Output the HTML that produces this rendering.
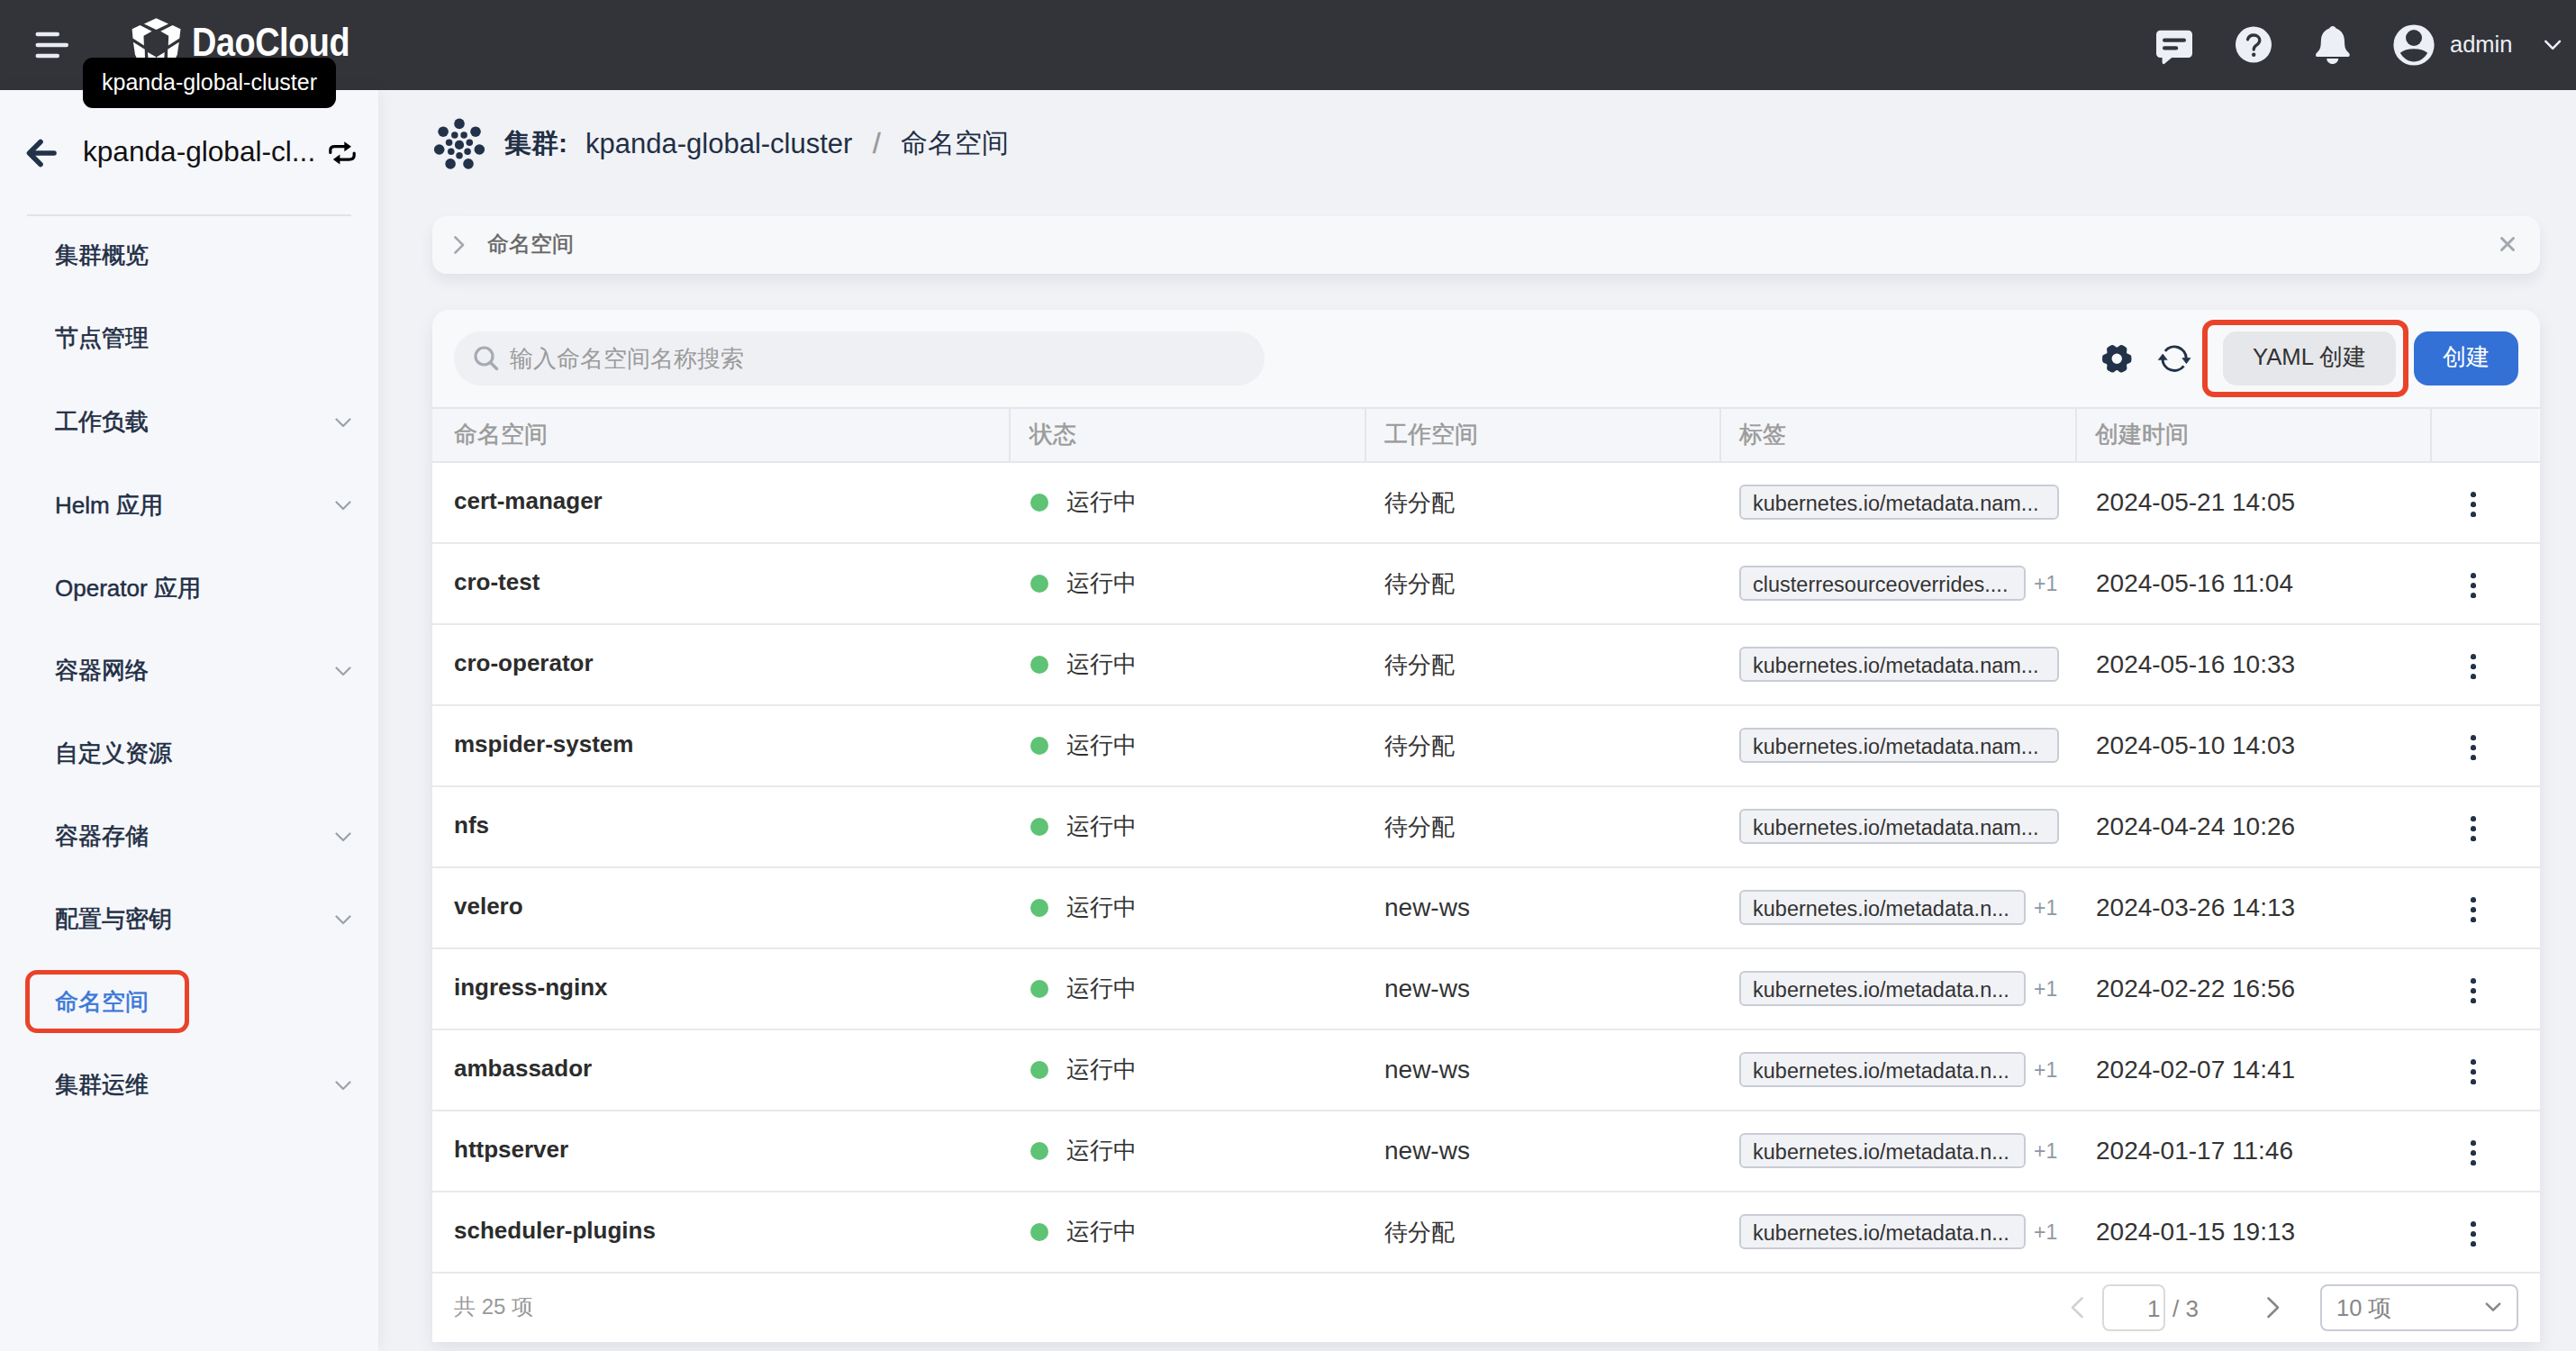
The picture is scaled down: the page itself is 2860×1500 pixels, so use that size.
<!DOCTYPE html>
<html><head><meta charset="utf-8">
<style>
*{box-sizing:border-box;margin:0;padding:0}
html,body{width:2860px;height:1500px;overflow:hidden}
body{position:relative;background:#f1f2f6;font-family:"Liberation Sans",sans-serif;color:#333}
.abs{position:absolute}
.t{position:absolute;white-space:nowrap;line-height:1}
#hdr{position:absolute;left:0;top:0;width:2860px;height:100px;background:#333439}
#side{position:absolute;left:0;top:100px;width:420px;height:1400px;background:#f6f7fb;box-shadow:2px 0 18px rgba(0,0,0,0.06)}
.menu{position:absolute;left:61px;font-size:25.5px;font-weight:400;-webkit-text-stroke:0.6px currentColor;color:#1f2f45;line-height:1;white-space:nowrap}
.lat{font-weight:400;-webkit-text-stroke:0.45px currentColor;font-size:26px}
.chev{position:absolute;left:372px;width:18px;height:11px}
.card{position:absolute;background:#fff}
.hcell{position:absolute;top:454px;height:58px;font-size:26px;font-weight:500;color:#9b9b9b;line-height:58px;white-space:nowrap}
.row{position:absolute;left:480px;width:2340px;height:90px;background:#fff;border-bottom:2px solid #e8e9ed}
.nm{position:absolute;left:24px;top:-2px;height:88px;line-height:88px;font-size:26px;font-weight:bold;color:#2c2c2c;white-space:nowrap}
.st{position:absolute;left:704px;top:-1px;height:88px;line-height:88px;font-size:26px;color:#333;white-space:nowrap}
.dot{position:absolute;left:664px;top:34px;width:20px;height:20px;border-radius:50%;background:#5ec374}
.ws{position:absolute;left:1057px;top:0;height:88px;line-height:88px;font-size:26px;color:#333;white-space:nowrap}
.ws.l{font-size:28px}
.tag{position:absolute;left:1451px;top:24px;height:39px;border:2px solid #c9ccd5;background:#f1f2f6;border-radius:6px;font-size:23.5px;color:#333;line-height:38px;padding-left:13px;white-space:nowrap;overflow:hidden}
.plus{position:absolute;left:1778px;top:0;height:88px;line-height:88px;font-size:23px;color:#8f97a3}
.dt{position:absolute;left:1847px;top:0;height:88px;line-height:88px;font-size:28px;color:#333;white-space:nowrap}
.hc{top:470px;font-size:25.5px;font-weight:400;-webkit-text-stroke:0.5px #9b9b9b;color:#9b9b9b}
.more{position:absolute;left:2263px;top:31.7px;width:6px;height:28px}
</style></head><body>

<!-- HEADER -->
<div id="hdr">
  <svg class="abs" style="left:0;top:0" width="100" height="100">
    <rect x="39.5" y="35.8" width="26.5" height="4.4" rx="2.2" fill="#e9ecf3"/>
    <rect x="39.5" y="47.8" width="36.5" height="4.4" rx="2.2" fill="#e9ecf3"/>
    <rect x="39.5" y="59.8" width="26.5" height="4.4" rx="2.2" fill="#e9ecf3"/>
  </svg>
  <svg class="abs" style="left:0;top:0" width="220" height="100">
    <g fill="#fff">
      <polygon points="173.5,20.2 187,26.4 173.5,33.1 159.9,26.4"/>
      <polygon points="146.6,32.2 155.5,28.1 168.6,34.7 159.5,39.7 159.9,50.5 147.5,42.6"/>
      <polygon points="200.5,32.2 191.6,28.1 178.3,34.7 187.2,39.7 186.8,50.5 199.3,42.6"/>
      <polygon points="147.9,46.7 160.7,54.8 161.1,70 153.7,68 150,60.8"/>
      <polygon points="198.8,46.7 186.2,54.8 186,70 193,68 196.8,60.8"/>
      <polygon points="164,57.9 173.2,63.3 173.2,70 164.9,70"/>
      <polygon points="182.7,57.9 174,63.3 174,70 181.9,70"/>
    </g>
  </svg>
  <div class="t" id="logo" style="left:213px;top:25px;font-size:44px;font-weight:bold;color:#fff;transform-origin:0 0;transform:scaleX(0.86);letter-spacing:-0.5px">DaoCloud</div>

  <!-- chat -->
  <svg class="abs" style="left:2390px;top:28px" width="50" height="48" viewBox="0 0 50 48">
    <path d="M8.5,5.8 H39.5 A4.5,4.5 0 0 1 44,10.3 V31.5 A4.5,4.5 0 0 1 39.5,36 H21.2 L13.2,42.8 A1.6,1.6 0 0 1 10.6,41.6 V36 H8.5 A4.5,4.5 0 0 1 4,31.5 V10.3 A4.5,4.5 0 0 1 8.5,5.8 Z" fill="#eceff6"/>
    <rect x="11" y="14.6" width="26" height="4.2" rx="2.1" fill="#333439"/>
    <rect x="11" y="23.3" width="17.2" height="4.2" rx="2.1" fill="#333439"/>
  </svg>
  <!-- help -->
  <svg class="abs" style="left:2478px;top:26px" width="48" height="48" viewBox="0 0 48 48">
    <circle cx="24" cy="23.6" r="20" fill="#eceff6"/>
    <path d="M17.5,17.8 C18.5,14.5 21,13 24.2,13 C28,13 30.8,15.5 30.8,18.7 C30.8,21.5 29,22.8 27,24.3 C25.3,25.6 24.2,26.6 24.2,29" fill="none" stroke="#333439" stroke-width="3.3" stroke-linecap="round"/>
    <circle cx="24.2" cy="34.8" r="2.2" fill="#333439"/>
  </svg>
  <!-- bell -->
  <svg class="abs" style="left:2566px;top:26px" width="48" height="48" viewBox="0 0 48 48">
    <path d="M23.9,3 C25.6,3 26.8,4.2 27.6,5.6 C32.5,7.2 36.2,11.5 36.8,17.5 L37.2,24 C37.5,27.5 38.5,29.5 41.5,32.5 C43.5,34.5 43,37.1 40.5,37.1 H7.3 C4.8,37.1 4.3,34.5 6.3,32.5 C9.3,29.5 10.3,27.5 10.6,24 L11,17.5 C11.6,11.5 15.3,7.2 20.2,5.6 C21,4.2 22.2,3 23.9,3 Z" fill="#eceff6"/>
    <path d="M17.2,39 H30.2 C30,42.5 27.3,45 23.7,45 C20.1,45 17.4,42.5 17.2,39 Z" fill="#eceff6"/>
  </svg>
  <!-- avatar -->
  <svg class="abs" style="left:2654px;top:24px" width="52" height="52" viewBox="0 0 52 52">
    <circle cx="26" cy="26" r="22.6" fill="#eceff6"/>
    <circle cx="26" cy="18" r="9" fill="#333439"/>
    <path d="M10.8,34.8 C14.5,31.5 19.8,30.2 26,30.2 C32.2,30.2 37.5,31.5 41.2,34.8 C37.8,40.5 32.5,44.5 26,44.5 C19.5,44.5 14.2,40.5 10.8,34.8 Z" fill="#333439"/>
  </svg>
  <div class="t" style="left:2720px;top:37px;font-size:25.5px;color:#eceff6">admin</div>
  <svg class="abs" style="left:2820px;top:40px" width="28" height="20" viewBox="0 0 28 20">
    <path d="M6.3,5.9 L14.15,13.9 L22,5.9" fill="none" stroke="#eceff6" stroke-width="2.5" stroke-linecap="round" stroke-linejoin="round"/>
  </svg>
</div>

<!-- TOOLTIP -->
<div class="abs" style="left:92px;top:64px;width:281px;height:56px;background:#000;border-radius:11px;z-index:5"></div>
<div class="t" style="left:113px;top:79px;font-size:25px;color:#fff;z-index:6">kpanda-global-cluster</div>

<!-- SIDEBAR -->
<div id="side"></div>
<div class="abs" style="left:28px;top:1077px;width:181.5px;height:70px;border:5.8px solid #e9432a;border-radius:13px;z-index:3"></div>
<svg class="abs" style="left:0;top:100px" width="420" height="200">
  <path d="M60,70 H33 M45,57.5 L32.5,70 L45,82.5" fill="none" stroke="#223248" stroke-width="5.6" stroke-linecap="round" stroke-linejoin="round"/>
  <g fill="none" stroke="#000" stroke-width="3.2" stroke-linecap="round">
    <path d="M366.8,69.5 V66.6 Q366.8,62.7 371.6,62.7 H383"/>
    <path d="M393.2,70.1 V72.5 Q393.2,77.1 387.3,77.1 H376.5"/>
  </g>
  <polygon points="382.3,57.2 390,62.7 382.3,68.3" fill="#000"/>
  <polygon points="377.4,71.5 369.8,77.1 377.4,82.5" fill="#000"/>
  <rect x="30" y="138" width="360" height="2" fill="#e1e3e8"/>
</svg>
<div class="t" style="left:92px;top:153px;font-size:31.6px;color:#111">kpanda-global-cl...</div>
<div class="menu" style="top:271.3px;color:#1f2f45">集群概览</div>
<div class="menu" style="top:363.3px;color:#1f2f45">节点管理</div>
<div class="menu" style="top:455.8px;color:#1f2f45">工作负载</div>
<svg class="chev" style="top:463.5px" viewBox="0 0 18 11"><path d="M1.5,1.5 L9,9 L16.5,1.5" fill="none" stroke="#9ca1a9" stroke-width="2.2" stroke-linecap="round" stroke-linejoin="round"/></svg>
<div class="menu" style="top:548.3px;color:#1f2f45"><span class="lat">Helm</span> 应用</div>
<svg class="chev" style="top:556.0px" viewBox="0 0 18 11"><path d="M1.5,1.5 L9,9 L16.5,1.5" fill="none" stroke="#9ca1a9" stroke-width="2.2" stroke-linecap="round" stroke-linejoin="round"/></svg>
<div class="menu" style="top:640.3px;color:#1f2f45"><span class="lat">Operator</span> 应用</div>
<div class="menu" style="top:732.3px;color:#1f2f45">容器网络</div>
<svg class="chev" style="top:740.0px" viewBox="0 0 18 11"><path d="M1.5,1.5 L9,9 L16.5,1.5" fill="none" stroke="#9ca1a9" stroke-width="2.2" stroke-linecap="round" stroke-linejoin="round"/></svg>
<div class="menu" style="top:824.3px;color:#1f2f45">自定义资源</div>
<div class="menu" style="top:916.3px;color:#1f2f45">容器存储</div>
<svg class="chev" style="top:924.0px" viewBox="0 0 18 11"><path d="M1.5,1.5 L9,9 L16.5,1.5" fill="none" stroke="#9ca1a9" stroke-width="2.2" stroke-linecap="round" stroke-linejoin="round"/></svg>
<div class="menu" style="top:1008.3px;color:#1f2f45">配置与密钥</div>
<svg class="chev" style="top:1016.0px" viewBox="0 0 18 11"><path d="M1.5,1.5 L9,9 L16.5,1.5" fill="none" stroke="#9ca1a9" stroke-width="2.2" stroke-linecap="round" stroke-linejoin="round"/></svg>
<div class="menu" style="top:1100.3px;color:#3a78d8">命名空间</div>
<div class="menu" style="top:1192.3px;color:#1f2f45">集群运维</div>
<svg class="chev" style="top:1200.0px" viewBox="0 0 18 11"><path d="M1.5,1.5 L9,9 L16.5,1.5" fill="none" stroke="#9ca1a9" stroke-width="2.2" stroke-linecap="round" stroke-linejoin="round"/></svg>

<!-- MAIN TITLE -->
<svg class="abs" style="left:470px;top:120px" width="80" height="80" viewBox="470 120 80 80">
  <g fill="#223248">
    <circle cx="510" cy="137.4" r="5.8"/><circle cx="492.1" cy="146.2" r="5.8"/><circle cx="528" cy="146.2" r="5.8"/>
    <circle cx="487.7" cy="166" r="5.8"/><circle cx="532.3" cy="166" r="5.8"/><circle cx="500.1" cy="181.9" r="5.8"/><circle cx="520" cy="181.9" r="5.8"/>
    <circle cx="504.8" cy="150.1" r="3.75"/><circle cx="515.1" cy="150.1" r="3.75"/><circle cx="498.6" cy="158.2" r="3.75"/><circle cx="521.3" cy="158.2" r="3.75"/>
    <circle cx="500.8" cy="168.2" r="3.75"/><circle cx="519.1" cy="168.2" r="3.75"/><circle cx="510" cy="172.7" r="3.75"/>
    <circle cx="510" cy="160.9" r="5.1"/>
  </g>
</svg>
<div class="t" style="left:560px;top:144px;font-size:30px;font-weight:700;color:#1f2f45">集群:</div>
<div class="t" style="left:650px;top:144px;font-size:31px;color:#1f2f45">kpanda-global-cluster</div>
<div class="t" style="left:969px;top:144px;font-size:31px;color:#999;-webkit-text-stroke:0.5px #999">/</div>
<div class="t" style="left:1000px;top:144px;font-size:30px;color:#1f2f45">命名空间</div>

<!-- COLLAPSE CARD -->
<div class="abs" style="left:480px;top:240px;width:2340px;height:64px;background:#f7f8fa;border-radius:16px;box-shadow:0 8px 16px rgba(20,30,50,0.07)"></div>
<svg class="abs" style="left:500px;top:258px" width="20" height="28" viewBox="0 0 20 28"><path d="M5.5,5.5 L14,14 L5.5,22.5" fill="none" stroke="#a3a7ae" stroke-width="2.6" stroke-linecap="round" stroke-linejoin="round"/></svg>
<div class="t" style="left:540.5px;top:260px;font-size:23.5px;font-weight:400;-webkit-text-stroke:0.5px #666;color:#666">命名空间</div>
<svg class="abs" style="left:2770px;top:257px" width="28" height="28" viewBox="0 0 28 28"><path d="M7.5,7.5 L20.5,20.5 M20.5,7.5 L7.5,20.5" fill="none" stroke="#a3a7ae" stroke-width="3" stroke-linecap="round"/></svg>

<!-- TABLE CARD -->
<div class="abs" style="left:480px;top:344px;width:2340px;height:1146px;background:#f8f9fb;border-radius:18px 18px 0 0;box-shadow:0 8px 20px rgba(20,30,50,0.08)"></div>
<div class="abs" style="left:504px;top:368px;width:900px;height:60px;background:#eff0f4;border-radius:30px"></div>
<svg class="abs" style="left:520px;top:378px" width="40" height="40" viewBox="0 0 40 40"><circle cx="17.5" cy="17.5" r="9.5" fill="none" stroke="#a6abb3" stroke-width="3.2"/><path d="M24.5,24.5 L31.5,31.5" stroke="#a6abb3" stroke-width="3.4" stroke-linecap="round"/></svg>
<div class="t" style="left:566px;top:385px;font-size:26px;color:#9b9b9b">输入命名空间名称搜索</div>

<!-- TOOLBAR -->
<svg class="abs" style="left:2330px;top:378px" width="40" height="40" viewBox="0 0 40 40">
  <path fill="#223248" fill-rule="evenodd" d="M36.45,20.30 L36.44,20.72 L36.43,21.15 L36.40,21.57 L36.36,21.99 L36.31,22.41 L36.25,22.83 L36.17,23.25 L36.00,23.65 L35.74,24.02 L35.39,24.36 L34.97,24.66 L34.49,24.93 L33.99,25.16 L33.47,25.38 L32.97,25.57 L32.50,25.76 L32.09,25.95 L31.73,26.15 L31.45,26.38 L31.25,26.65 L31.12,26.96 L31.06,27.32 L31.06,27.73 L31.10,28.18 L31.18,28.68 L31.26,29.21 L31.33,29.76 L31.38,30.32 L31.38,30.87 L31.33,31.38 L31.22,31.86 L31.03,32.27 L30.77,32.61 L30.44,32.89 L30.11,33.15 L29.77,33.41 L29.43,33.65 L29.07,33.89 L28.71,34.11 L28.35,34.33 L27.98,34.54 L27.60,34.73 L27.22,34.92 L26.84,35.10 L26.45,35.27 L26.06,35.42 L25.66,35.56 L25.23,35.62 L24.77,35.57 L24.31,35.44 L23.83,35.22 L23.36,34.95 L22.91,34.63 L22.47,34.29 L22.05,33.95 L21.65,33.64 L21.28,33.37 L20.92,33.17 L20.58,33.04 L20.25,33.00 L19.92,33.04 L19.58,33.17 L19.22,33.37 L18.85,33.64 L18.45,33.95 L18.03,34.29 L17.59,34.63 L17.14,34.95 L16.67,35.22 L16.19,35.44 L15.73,35.57 L15.27,35.62 L14.84,35.56 L14.44,35.42 L14.05,35.27 L13.66,35.10 L13.28,34.92 L12.90,34.73 L12.52,34.54 L12.15,34.33 L11.79,34.11 L11.43,33.89 L11.07,33.65 L10.73,33.41 L10.39,33.15 L10.06,32.89 L9.73,32.61 L9.47,32.27 L9.28,31.86 L9.17,31.38 L9.12,30.87 L9.12,30.32 L9.17,29.76 L9.24,29.21 L9.32,28.68 L9.40,28.18 L9.44,27.73 L9.44,27.32 L9.38,26.96 L9.25,26.65 L9.05,26.38 L8.77,26.15 L8.41,25.95 L8.00,25.76 L7.53,25.57 L7.03,25.38 L6.51,25.16 L6.01,24.93 L5.53,24.66 L5.11,24.36 L4.76,24.02 L4.50,23.65 L4.33,23.25 L4.25,22.83 L4.19,22.41 L4.14,21.99 L4.10,21.57 L4.07,21.15 L4.06,20.72 L4.05,20.30 L4.06,19.88 L4.07,19.45 L4.10,19.03 L4.14,18.61 L4.19,18.19 L4.25,17.77 L4.33,17.35 L4.50,16.95 L4.76,16.58 L5.11,16.24 L5.53,15.94 L6.01,15.67 L6.51,15.44 L7.03,15.22 L7.53,15.03 L8.00,14.84 L8.41,14.65 L8.77,14.45 L9.05,14.22 L9.25,13.95 L9.38,13.64 L9.44,13.28 L9.44,12.87 L9.40,12.42 L9.32,11.92 L9.24,11.39 L9.17,10.84 L9.12,10.28 L9.12,9.73 L9.17,9.22 L9.28,8.74 L9.47,8.33 L9.73,7.99 L10.06,7.71 L10.39,7.45 L10.73,7.19 L11.07,6.95 L11.43,6.71 L11.79,6.49 L12.15,6.27 L12.52,6.06 L12.90,5.87 L13.28,5.68 L13.66,5.50 L14.05,5.33 L14.44,5.18 L14.84,5.04 L15.27,4.98 L15.73,5.03 L16.19,5.16 L16.67,5.38 L17.14,5.65 L17.59,5.97 L18.03,6.31 L18.45,6.65 L18.85,6.96 L19.22,7.23 L19.58,7.43 L19.92,7.56 L20.25,7.60 L20.58,7.56 L20.92,7.43 L21.28,7.23 L21.65,6.96 L22.05,6.65 L22.47,6.31 L22.91,5.97 L23.36,5.65 L23.83,5.38 L24.31,5.16 L24.77,5.03 L25.23,4.98 L25.66,5.04 L26.06,5.18 L26.45,5.33 L26.84,5.50 L27.22,5.68 L27.60,5.87 L27.98,6.06 L28.35,6.27 L28.71,6.49 L29.07,6.71 L29.43,6.95 L29.77,7.19 L30.11,7.45 L30.44,7.71 L30.77,7.99 L31.03,8.33 L31.22,8.74 L31.33,9.22 L31.38,9.73 L31.38,10.28 L31.33,10.84 L31.26,11.39 L31.18,11.92 L31.10,12.42 L31.06,12.87 L31.06,13.28 L31.12,13.64 L31.25,13.95 L31.45,14.22 L31.73,14.45 L32.09,14.65 L32.50,14.84 L32.97,15.03 L33.47,15.22 L33.99,15.44 L34.49,15.67 L34.97,15.94 L35.39,16.24 L35.74,16.58 L36.00,16.95 L36.17,17.35 L36.25,17.77 L36.31,18.19 L36.36,18.61 L36.40,19.03 L36.43,19.45 L36.44,19.88 Z M25.95,20.30 A5.7,5.7 0 1 0 14.55,20.30 A5.7,5.7 0 1 0 25.95,20.30 Z"/>
</svg>
<svg class="abs" style="left:2394px;top:378px" width="40" height="40" viewBox="0 0 40 40">
  <g fill="none" stroke="#223248" stroke-width="3">
    <path d="M9.84,11.9 A13.2,13.2 0 0 1 33.3,20.2"/>
    <path d="M30.5,28.3 A13.2,13.2 0 0 1 6.9,20.2"/>
  </g>
  <polygon points="28.8,19.6 38,19.6 33.4,25.7" fill="#223248" stroke="#223248" stroke-width="0.6" stroke-linejoin="round"/>
  <polygon points="2.2,21.6 12.2,21.6 7.2,15" fill="#223248" stroke="#223248" stroke-width="0.6" stroke-linejoin="round"/>
</svg>
<div class="abs" style="left:2445px;top:355px;width:229px;height:86px;border:6.2px solid #e9432a;border-radius:13px"></div>
<div class="abs" style="left:2468px;top:368px;width:192px;height:60px;background:#e6e7eb;border-radius:15px"></div>
<div class="t" style="left:2501px;top:384px;font-size:25.7px;color:#333">YAML 创建</div>
<div class="abs" style="left:2680px;top:368px;width:116px;height:60px;background:#3371d6;border-radius:16px"></div>
<div class="t" style="left:2712px;top:384px;font-size:25.5px;color:#fff">创建</div>

<!-- TABLE HEADER -->
<div class="abs" style="left:480px;top:452px;width:2340px;height:2px;background:#e4e6eb"></div>
<div class="abs" style="left:480px;top:454px;width:2338px;height:58px;background:#f5f6f9"></div>
<div class="abs" style="left:480px;top:512px;width:2340px;height:2px;background:#e4e6eb"></div>
<div class="abs" style="left:1120px;top:454px;width:2px;height:58px;background:#e4e6eb"></div>
<div class="abs" style="left:1515px;top:454px;width:2px;height:58px;background:#e4e6eb"></div>
<div class="abs" style="left:1909px;top:454px;width:2px;height:58px;background:#e4e6eb"></div>
<div class="abs" style="left:2304px;top:454px;width:2px;height:58px;background:#e4e6eb"></div>
<div class="abs" style="left:2698px;top:454px;width:2px;height:58px;background:#e4e6eb"></div>
<div class="t hc" style="left:504px">命名空间</div>
<div class="t hc" style="left:1143px">状态</div>
<div class="t hc" style="left:1537px">工作空间</div>
<div class="t hc" style="left:1931px">标签</div>
<div class="t hc" style="left:2326px">创建时间</div>
<div class="row" style="top:514px">
  <div class="nm">cert-manager</div><div class="dot"></div><div class="st">运行中</div><div class="ws">待分配</div>
  <div class="tag" style="width:355px">kubernetes.io/metadata.nam...</div>
  <div class="dt">2024-05-21 14:05</div>
  <svg class="more" viewBox="0 0 6 28"><circle cx="3" cy="3.2" r="3.1" fill="#223248"/><circle cx="3" cy="14.2" r="3.1" fill="#223248"/><circle cx="3" cy="25.2" r="3.1" fill="#223248"/></svg>
</div>
<div class="row" style="top:604px">
  <div class="nm">cro-test</div><div class="dot"></div><div class="st">运行中</div><div class="ws">待分配</div>
  <div class="tag" style="width:318px">clusterresourceoverrides....</div><div class="plus">+1</div>
  <div class="dt">2024-05-16 11:04</div>
  <svg class="more" viewBox="0 0 6 28"><circle cx="3" cy="3.2" r="3.1" fill="#223248"/><circle cx="3" cy="14.2" r="3.1" fill="#223248"/><circle cx="3" cy="25.2" r="3.1" fill="#223248"/></svg>
</div>
<div class="row" style="top:694px">
  <div class="nm">cro-operator</div><div class="dot"></div><div class="st">运行中</div><div class="ws">待分配</div>
  <div class="tag" style="width:355px">kubernetes.io/metadata.nam...</div>
  <div class="dt">2024-05-16 10:33</div>
  <svg class="more" viewBox="0 0 6 28"><circle cx="3" cy="3.2" r="3.1" fill="#223248"/><circle cx="3" cy="14.2" r="3.1" fill="#223248"/><circle cx="3" cy="25.2" r="3.1" fill="#223248"/></svg>
</div>
<div class="row" style="top:784px">
  <div class="nm">mspider-system</div><div class="dot"></div><div class="st">运行中</div><div class="ws">待分配</div>
  <div class="tag" style="width:355px">kubernetes.io/metadata.nam...</div>
  <div class="dt">2024-05-10 14:03</div>
  <svg class="more" viewBox="0 0 6 28"><circle cx="3" cy="3.2" r="3.1" fill="#223248"/><circle cx="3" cy="14.2" r="3.1" fill="#223248"/><circle cx="3" cy="25.2" r="3.1" fill="#223248"/></svg>
</div>
<div class="row" style="top:874px">
  <div class="nm">nfs</div><div class="dot"></div><div class="st">运行中</div><div class="ws">待分配</div>
  <div class="tag" style="width:355px">kubernetes.io/metadata.nam...</div>
  <div class="dt">2024-04-24 10:26</div>
  <svg class="more" viewBox="0 0 6 28"><circle cx="3" cy="3.2" r="3.1" fill="#223248"/><circle cx="3" cy="14.2" r="3.1" fill="#223248"/><circle cx="3" cy="25.2" r="3.1" fill="#223248"/></svg>
</div>
<div class="row" style="top:964px">
  <div class="nm">velero</div><div class="dot"></div><div class="st">运行中</div><div class="ws l">new-ws</div>
  <div class="tag" style="width:318px">kubernetes.io/metadata.n...</div><div class="plus">+1</div>
  <div class="dt">2024-03-26 14:13</div>
  <svg class="more" viewBox="0 0 6 28"><circle cx="3" cy="3.2" r="3.1" fill="#223248"/><circle cx="3" cy="14.2" r="3.1" fill="#223248"/><circle cx="3" cy="25.2" r="3.1" fill="#223248"/></svg>
</div>
<div class="row" style="top:1054px">
  <div class="nm">ingress-nginx</div><div class="dot"></div><div class="st">运行中</div><div class="ws l">new-ws</div>
  <div class="tag" style="width:318px">kubernetes.io/metadata.n...</div><div class="plus">+1</div>
  <div class="dt">2024-02-22 16:56</div>
  <svg class="more" viewBox="0 0 6 28"><circle cx="3" cy="3.2" r="3.1" fill="#223248"/><circle cx="3" cy="14.2" r="3.1" fill="#223248"/><circle cx="3" cy="25.2" r="3.1" fill="#223248"/></svg>
</div>
<div class="row" style="top:1144px">
  <div class="nm">ambassador</div><div class="dot"></div><div class="st">运行中</div><div class="ws l">new-ws</div>
  <div class="tag" style="width:318px">kubernetes.io/metadata.n...</div><div class="plus">+1</div>
  <div class="dt">2024-02-07 14:41</div>
  <svg class="more" viewBox="0 0 6 28"><circle cx="3" cy="3.2" r="3.1" fill="#223248"/><circle cx="3" cy="14.2" r="3.1" fill="#223248"/><circle cx="3" cy="25.2" r="3.1" fill="#223248"/></svg>
</div>
<div class="row" style="top:1234px">
  <div class="nm">httpserver</div><div class="dot"></div><div class="st">运行中</div><div class="ws l">new-ws</div>
  <div class="tag" style="width:318px">kubernetes.io/metadata.n...</div><div class="plus">+1</div>
  <div class="dt">2024-01-17 11:46</div>
  <svg class="more" viewBox="0 0 6 28"><circle cx="3" cy="3.2" r="3.1" fill="#223248"/><circle cx="3" cy="14.2" r="3.1" fill="#223248"/><circle cx="3" cy="25.2" r="3.1" fill="#223248"/></svg>
</div>
<div class="row" style="top:1324px">
  <div class="nm">scheduler-plugins</div><div class="dot"></div><div class="st">运行中</div><div class="ws">待分配</div>
  <div class="tag" style="width:318px">kubernetes.io/metadata.n...</div><div class="plus">+1</div>
  <div class="dt">2024-01-15 19:13</div>
  <svg class="more" viewBox="0 0 6 28"><circle cx="3" cy="3.2" r="3.1" fill="#223248"/><circle cx="3" cy="14.2" r="3.1" fill="#223248"/><circle cx="3" cy="25.2" r="3.1" fill="#223248"/></svg>
</div>

<!-- FOOTER -->
<div class="abs" style="left:480px;top:1414px;width:2340px;height:76px;background:#fff"></div>
<div class="t" style="left:504px;top:1439px;font-size:24px;color:#999">共 25 项</div>
<svg class="abs" style="left:2292px;top:1436px" width="28" height="32" viewBox="0 0 28 32"><path d="M19.5,5.5 L9,15.8 L19.5,26" fill="none" stroke="#d2d2d2" stroke-width="2.6" stroke-linecap="round" stroke-linejoin="round"/></svg>
<div class="abs" style="left:2334px;top:1426px;width:70px;height:52px;border:2px solid #dadada;border-radius:8px;background:#fff"></div>
<div class="t" style="left:2384px;top:1440px;font-size:26px;color:#888">1</div>
<div class="t" style="left:2412px;top:1440px;font-size:26px;color:#888">/ 3</div>
<svg class="abs" style="left:2510px;top:1436px" width="28" height="32" viewBox="0 0 28 32"><path d="M8.5,5.5 L19,15.8 L8.5,26" fill="none" stroke="#888" stroke-width="2.6" stroke-linecap="round" stroke-linejoin="round"/></svg>
<div class="abs" style="left:2576px;top:1426px;width:220px;height:52px;border:2px solid #c8ccd5;border-radius:8px;background:#fff"></div>
<div class="t" style="left:2594px;top:1440px;font-size:25.5px;color:#888">10 项</div>
<svg class="abs" style="left:2755px;top:1440px" width="26" height="22" viewBox="0 0 26 22"><path d="M5.8,7.6 L13,14.6 L20.2,7.6" fill="none" stroke="#888" stroke-width="2.6" stroke-linecap="round" stroke-linejoin="round"/></svg>

</body></html>
